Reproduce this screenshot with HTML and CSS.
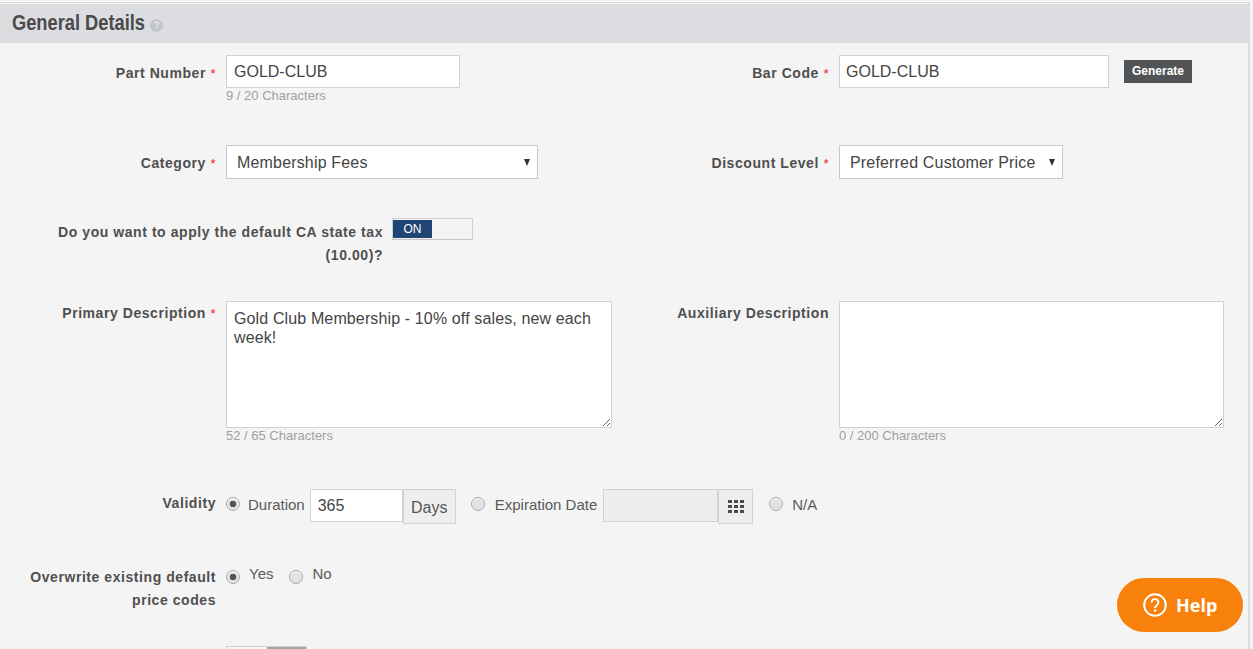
FILE: index.html
```html
<!DOCTYPE html>
<html lang="en">
<head>
<meta charset="utf-8">
<title>General Details</title>
<link rel="stylesheet" href="styles.css">
</head>
<body>
<main class="page">
  <header class="section-head">
    <h2>General Details</h2>
    <span class="hint">?</span>
  </header>
  <form class="form">
    <div class="row row-part">
      <div class="field">
        <label class="label">Part Number <b>*</b></label>
        <div class="control">
          <input class="input w-234" type="text" value="GOLD-CLUB">
          <div class="count">9 / 20 Characters</div>
        </div>
      </div>
      <div class="field">
        <label class="label">Bar Code <b>*</b></label>
        <div class="control inline">
          <input class="input w-270" type="text" value="GOLD-CLUB">
          <button class="generate" type="button">Generate</button>
        </div>
      </div>
    </div>
    <div class="row row-cat">
      <div class="field">
        <label class="label">Category <b>*</b></label>
        <div class="select-wrap w-312">
          <select class="select"><option>Membership Fees</option></select>
        </div>
      </div>
      <div class="field">
        <label class="label">Discount Level <b>*</b></label>
        <div class="select-wrap w-224">
          <select class="select"><option>Preferred Customer Price</option></select>
        </div>
      </div>
    </div>
    <div class="row row-tax">
      <div class="tax">
        <label class="label tax-label">Do you want to apply the default CA state tax (10.00)?</label>
        <div class="toggle"><span class="on">ON</span><span class="off"></span></div>
      </div>
    </div>
    <div class="row row-desc">
      <div class="field">
        <label class="label">Primary Description <b>*</b></label>
        <div class="control">
          <textarea class="area">Gold Club Membership - 10% off sales, new each week!</textarea>
          <div class="count">52 / 65 Characters</div>
        </div>
      </div>
      <div class="field">
        <label class="label">Auxiliary Description</label>
        <div class="control">
          <textarea class="area area-aux"></textarea>
          <div class="count">0 / 200 Characters</div>
        </div>
      </div>
    </div>
    <div class="row row-valid">
      <div class="field wide">
        <label class="label">Validity</label>
        <div class="control inline options">
          <span class="radio checked"></span><span class="opt">Duration</span>
          <input class="input days-input" type="text" value="365"><span class="addon days">Days</span>
          <span class="radio r-exp"></span><span class="opt">Expiration Date</span>
          <input class="input date-input" type="text" disabled><span class="addon cal">
            <svg width="16" height="13" viewBox="0 0 16 13"><path fill="#4c4c4c" d="M0 0h4v3H0zM6 0h4v3H6zM12 0h4v3h-4zM0 5h4v3H0zM6 5h4v3H6zM12 5h4v3h-4zM0 10h4v3H0zM6 10h4v3H6zM12 10h4v3h-4z"/></svg></span>
          <span class="radio r-na"></span><span class="opt">N/A</span>
        </div>
      </div>
    </div>
    <div class="row row-over">
      <div class="field wide">
        <label class="label">Overwrite existing default price codes</label>
        <div class="control inline yesno">
          <span class="radio checked"></span><span class="opt">Yes</span>
          <span class="radio r-no"></span><span class="opt">No</span>
        </div>
      </div>
    </div>
    <div class="row">
      <div class="field">
        <span class="label"></span>
        <div class="toggle dark"><span class="blank"></span><span class="grey"></span></div>
      </div>
    </div>
  </form>
</main>
<button class="help" type="button">
  <svg width="24" height="24" viewBox="0 0 24 24" fill="none"><circle cx="12" cy="12" r="10.8" stroke="#fff" stroke-width="2"/><path d="M8.6 9.4a3.4 3.4 0 1 1 5.2 2.9c-1.2.8-1.8 1.3-1.8 2.7" stroke="#fff" stroke-width="2"/><rect x="10.9" y="16.4" width="2.2" height="2.4" fill="#fff"/></svg>
  <span>Help</span>
</button>
</body>
</html>
```

FILE: styles.css
```css
* { box-sizing: border-box; }
html, body { margin: 0; height: 100%; overflow: hidden; }
body {
  background: #f4f4f4;
  color: #555;
  font-family: "Liberation Sans", Arial, sans-serif;
  font-size: 14px;
}
.page {
  width: 1250px;
  margin-top: 2px;
  height: 647px;
  border-top: 1px solid #dcdcdc;
  border-right: 2px solid #dcdcdc;
  padding-top: 1px;
}
.section-head {
  display: flex;
  align-items: center;
  height: 39px;
  padding-left: 12px;
  padding-bottom: 2px;
  background: #dcdde0;
}
.section-head h2 {
  flex: none;
  width: 133px;
  margin: 0;
  font-size: 22px;
  font-weight: 700;
  white-space: nowrap;
  color: #4a4a4a;
  transform: scaleX(.83);
  transform-origin: left center;
}
.hint {
  display: inline-flex;
  align-items: center;
  justify-content: center;
  width: 13px;
  height: 13px;
  margin: 5px 0 0 5px;
  border-radius: 50%;
  background: #c4c5c7;
  color: #e6e6e6;
  font-size: 10px;
  font-weight: 700;
}
.form { padding-top: 12px; }
.row { display: grid; grid-template-columns: 613px 613px; }
.row-part { height: 90px; }
.row-cat { height: 73px; }
.row-tax { height: 83px; }
.row-desc { height: 188px; }
.row-valid { height: 76px; }
.row-over { height: 81px; }
.field { display: flex; align-items: flex-start; }
.wide { grid-column: 1 / 3; }
.label {
  flex: none;
  width: 216px;
  margin-right: 10px;
  padding-top: 7px;
  text-align: right;
  font-weight: 700;
  font-size: 14px;
  line-height: 23px;
  letter-spacing: .56px;
  color: #4f4f4f;
}
.label b { color: #e8202a; font-weight: 400; font-size: 13px; }
.control { display: block; }
.inline { display: flex; align-items: flex-start; }
.input, .select, .area {
  display: block;
  border: 1px solid #d2d2d2;
  border-radius: 0;
  background: #fff;
  color: #444;
  font-family: "Liberation Sans", Arial, sans-serif;
  font-size: 16px;
  outline: none;
}
.input { height: 33px; padding: 0 7px; }
.w-234 { width: 234px; }
.w-270 { width: 270px; padding-left: 6px; }
.select-wrap { position: relative; flex: none; }
.select-wrap::after {
  content: "";
  position: absolute;
  top: 14px;
  right: 8px;
  border-left: 3.5px solid transparent;
  border-right: 3.5px solid transparent;
  border-top: 7px solid #333;
  pointer-events: none;
}
.select {
  width: 100%;
  height: 34px;
  padding: 0 10px;
  border-color: #c8c8c8;
  letter-spacing: .17px;
  appearance: none;
  -webkit-appearance: none;
}
.w-312 { width: 312px; }
.w-224 { width: 224px; }
.area {
  width: 386px;
  height: 127px;
  padding: 7px;
  line-height: 19px;
  letter-spacing: .13px;
  resize: both;
}
.area-aux { width: 385px; }
.count { font-size: 13px; color: #a0a0a0; line-height: 15px; }
.generate {
  height: 23px;
  margin: 5px 0 0 15px;
  padding: 0 8px 2px;
  border: 0;
  background: #515457;
  color: #fff;
  font-family: "Liberation Sans", Arial, sans-serif;
  font-size: 12px;
  font-weight: 700;
}
.tax { display: flex; align-items: flex-start; grid-column: 1 / 3; padding-left: 48px; }
.tax-label { width: 335px; padding-top: 3px; margin-right: 9px; }
.toggle {
  display: flex;
  width: 81px;
  height: 22px;
  border: 1px solid #d0d0d0;
  border-bottom-color: #c4c4c4;
  background: #f4f4f4;
}
.toggle .on {
  width: 39px;
  margin: 1px 0;
  background: #1f4575;
  color: #fff;
  font-size: 12px;
  text-align: center;
  line-height: 18px;
}
.toggle .blank { width: 40px; background: #f7f7f7; }
.toggle .grey { width: 39px; background: #a3a3a3; }
.row-desc .label { padding-top: 1px; }
.row-valid .label { padding-top: 3px; }
.row-over .label { padding-top: 1px; }
.radio {
  flex: none;
  width: 14px;
  height: 14px;
  border: 1px solid #aaa;
  border-radius: 50%;
  background: #e2e2e2;
  box-shadow: inset 0 1px 1px #fff;
  margin-top: 8px;
}
.radio.checked { background: radial-gradient(circle, #555 0 3px, #e2e2e2 3.6px); }
.opt { line-height: 16px; margin: 8px 0 0 8px; color: #5a5a5a; font-size: 15px; }
.days-input { width: 93px; margin-left: 5px; }
.addon {
  display: flex;
  align-items: center;
  justify-content: center;
  height: 35px;
  border: 1px solid #d2d2d2;
  background: #eee;
  color: #555;
  font-size: 16px;
}
.days { width: 53px; padding-top: 2px; }
.r-exp { margin-left: 15px; }
.r-exp + .opt { margin-left: 10px; }
.date-input { width: 115px; margin-left: 6px; background: #eee; }
.cal { width: 35px; }
.r-na { margin-left: 16px; }
.r-na + .opt { margin-left: 9px; }
.yesno .radio { margin-top: 5px; }
.yesno .opt { margin-top: 1px; margin-left: 9px; }
.yesno .r-no { margin-left: 16px; }
.help {
  position: fixed;
  left: 1117px;
  top: 578px;
  display: flex;
  align-items: center;
  gap: 9px;
  width: 126px;
  height: 54px;
  padding: 0 0 0 26px;
  border: 0;
  border-radius: 27px;
  background: #f8810b;
  color: #fff;
  font-family: "Open Sans", sans-serif;
  font-size: 18px;
  font-weight: 700;
}
```
